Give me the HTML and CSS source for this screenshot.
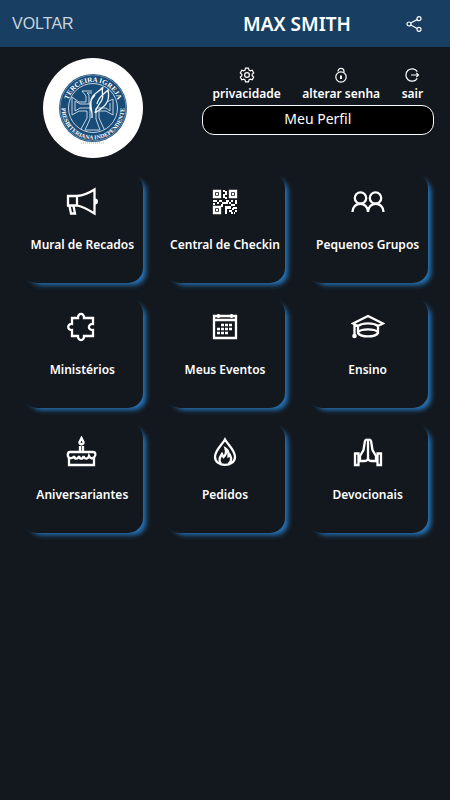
FILE: index.html
```html
<!DOCTYPE html>
<html lang="pt-BR">
<head>
    <meta charset="UTF-8">
    <meta name="viewport" content="width=device-width, initial-scale=1.0">
    <title>Meu Perfil</title>
    <link rel="stylesheet" href="styles.css">
</head>
<body>

<header class="topbar">
    <a href="#" class="back">VOLTAR</a>
    <h1 class="title">MAX SMITH</h1>
    <button type="button" class="share" aria-label="Compartilhar">
        <svg width="16" height="16" viewBox="0 0 16 16">
            <path d="M4.7 7 L11.2 3.6 M4.7 9 L11.2 12.6"/>
            <circle cx="3" cy="8" r="2"/>
            <circle cx="13" cy="2.7" r="2"/>
            <circle cx="13" cy="13.3" r="2"/>
        </svg>
    </button>
</header>

<main>
    <section class="profile">
        <div class="logo">
            <svg width="100" height="100" viewBox="0 0 100 100">
                <defs>
                    <path id="ring" d="M24 50 A26 26 0 0 1 76 50"/>
                    <path id="ringBottom" d="M20.4 39.2 A31.5 31.5 0 1 0 79.6 39.2"/>
                </defs>
                <circle cx="50" cy="50" r="34" fill="#184c78"/>
                <circle cx="50" cy="50" r="33" fill="none" stroke="#9db7cc" stroke-width="0.6"/>
                <circle cx="50" cy="50" r="24.5" fill="none" stroke="#c3d2df" stroke-width="1"/>
                <g class="logo-text">
                    <text class="logo-top"><textPath href="#ring" startOffset="50%" text-anchor="middle">TERCEIRA IGREJA</textPath></text>
                    <text><textPath href="#ringBottom" startOffset="50%" text-anchor="middle">PRESBITERIANA INDEPENDENTE</textPath></text>
                </g>
                <g fill="none" stroke="#c3d2df">
                    <path d="M43 44 V38 L39 33 H49 M43 44 H36 L29 39 V57 L36 53 H44 V60 L38 71 M56 53 H63 L70 57 V41 L64 44 M56 53 V60 L61 71"/>
                    <path d="M46 46 V37 L44 35 H49 M46 46 H37 L32 43 V53 L37 50 H47 V61 L42 72 H57 L53 61 V50 H63 L67 53 V45"/>
                    <path stroke="#f0f4f7" stroke-width="1.3" d="M49 60 C50 51 45 45 50 38 C53 34 57 33 60 29 C57 36 63 38 57 45 C55 48 53 50 52 55 M52 55 C59 50 68 46 65 32 C60 37 55 39 54 46 M49 55 C45 48 47 42 52 37"/>
                </g>
                <path d="M38 85 H62" stroke="#9db7cc" stroke-width="1" stroke-dasharray="1 1"/>
            </svg>
        </div>
        <div class="account">
            <nav class="account-links">
                <a href="#">
                    <svg width="16" height="16" viewBox="0 0 16 16">
                        <path d="M6.5 1.2 H9.5 L10 3.2 L11.3 3.9 L13.2 3.3 L14.7 5.9 L13.2 7.3 V8.7 L14.7 10.1 L13.2 12.7 L11.3 12.1 L10 12.8 L9.5 14.8 H6.5 L6 12.8 L4.7 12.1 L2.8 12.7 L1.3 10.1 L2.8 8.7 V7.3 L1.3 5.9 L2.8 3.3 L4.7 3.9 L6 3.2 Z"/>
                        <circle cx="8" cy="8" r="2.4"/>
                    </svg>
                    privacidade
                </a>
                <a href="#">
                    <svg width="16" height="16" viewBox="0 0 16 16">
                        <circle cx="8" cy="10" r="5.2"/>
                        <path d="M5 4.4 A3 3 0 0 1 11 4.4 V5.6"/>
                        <path d="M8 8.6 V12" stroke-width="2"/>
                    </svg>
                    alterar senha
                </a>
                <a href="#">
                    <svg width="16" height="16" viewBox="0 0 16 16">
                        <path d="M13.3 4.6 A6.2 6.2 0 1 0 13.3 11.4 M7 8 H14.5 M12.3 5.8 L14.5 8 L12.3 10.2"/>
                    </svg>
                    sair
                </a>
            </nav>
            <button type="button" class="profile-btn">Meu Perfil</button>
        </div>
    </section>

    <nav class="menu">
        <a href="#" class="card">
            <svg width="32" height="32" viewBox="0 0 32 32">
                <path d="M2 10 H11 C18 9.5 23 7 28.5 3.5 V27.5 C23 24 18 21 11 19.5 H2 Z M11 10 V19.5 M3.5 20 L5 27.5 H9 L7.5 20"/>
                <path class="solid" d="M29 12.5 A3 3 0 0 1 29 18.5 Z"/>
            </svg>
            <span>Mural de Recados</span>
        </a>
        <a href="#" class="card">
            <svg width="32" height="32" viewBox="0 0 32 32">
                <path d="M5 5 H11 V11 H5 Z M21 5 H27 V11 H21 Z M5 21 H11 V27 H5 Z"/>
                <path class="solid" d="M7 7h2v2h-2z M23 7h2v2h-2z M7 23h2v2h-2z M14 4h2v2h-2z M16 5h2v4h-2z M14 8h2v4h-2z M16 11h2v2h-2z M4 14h4v2h-4z M8 16h2v2h-2z M10 14h3v2h-3z M13 16h6v2h-6z M12 18h2v3h-2z M17 14h3v2h-3z M22 14h2v2h-2z M26 14h2v4h-2z M22 18h4v2h-4z M20 16h2v2h-2z M4 17h2v2h-2z M16 20h6v3h-6z M24 21h4v2h-4z M16 23h2v5h-2z M20 24h3v2h-3z M23 22h2v2h-2z M26 24h2v2h-2z M22 26h2v2h-2z M25 26h1v2h-1z"/>
            </svg>
            <span>Central de Checkin</span>
        </a>
        <a href="#" class="card">
            <svg width="34" height="32" viewBox="0 0 34 32">
                <circle cx="9.5" cy="12" r="5.7"/>
                <circle cx="24.5" cy="12" r="5.7"/>
                <path d="M1.5 26 C1.5 15 17 15 17 26 C17 15 32.5 15 32.5 26"/>
            </svg>
            <span>Pequenos Grupos</span>
        </a>
        <a href="#" class="card">
            <svg width="32" height="32" viewBox="0 0 32 32">
                <path d="M6 7 H12 C11.5 1.5 18.5 1.5 18 7 H27 V13 C21.5 12.5 21.5 19.5 27 19 V25 H18 C18.5 30.5 11.5 30.5 12 25 H6 V19 C1 19.5 1 12.5 6 13 Z"/>
            </svg>
            <span>Ministérios</span>
        </a>
        <a href="#" class="card">
            <svg width="32" height="32" viewBox="0 0 32 32">
                <path d="M5 5 H27 V27 H5 Z M5 9 H27 M9.5 3 V7 M22.5 3 V7"/>
                <path class="dots" d="M12 14 H24 M8 18 H24 M8 22 H20"/>
            </svg>
            <span>Meus Eventos</span>
        </a>
        <a href="#" class="card">
            <svg width="34" height="32" viewBox="0 0 34 32">
                <path d="M2 12.5 L17 5 L32 12.5 L27 15 C22 11.5 12 11.5 7 15 Z M7 14 V22 C10 26.5 24 26.5 27 22 V14 M7 21 C11 17.5 23 17.5 27 21 M3.5 13 V23"/>
                <circle class="solid" cx="3.5" cy="25" r="2.3"/>
            </svg>
            <span>Ensino</span>
        </a>
        <a href="#" class="card">
            <svg width="32" height="32" viewBox="0 0 32 32">
                <path d="M3 22 V29 H28 V22 M15.5 2 L13.5 6 C13 9 18 9 17.5 6 Z M14 10 V16 M17 10 V16"/>
                <path d="M4 16 H27 C30 16 30 20 28 21.5 C26 23 24 22 23 20 C22 23.5 18.5 23.5 17.5 20 C17 23.5 13.5 23.5 13 20 C12 23.5 8.5 23.5 8 20 C7 23 1.8 23 1.8 19 C1.8 17 2.5 16 4 16 Z"/>
            </svg>
            <span>Aniversariantes</span>
        </a>
        <a href="#" class="card">
            <svg width="32" height="32" viewBox="0 0 32 32">
                <path d="M16 3.5 C13 9 6 14 6 21 C6 31.5 26 31.5 26 21 C26 14 19 9 16 3.5 Z M12 28 C9 24 11 21 13 18 L14.5 21 C17 19 17.5 16 16.5 12.5 C20.5 15 19.5 18 19.5 20 L21 19 C23 23 22 26 19.5 28"/>
            </svg>
            <span>Pedidos</span>
        </a>
        <a href="#" class="card">
            <svg width="32" height="32" viewBox="0 0 32 32">
                <path d="M16 4 V23 M16 4 C14 3 13 4 12.8 6 L11.5 14 L8 20 V25 H12 C14 25 16 24.5 16 22 C16 24.5 18 25 20 25 H24 V20 L20.5 14 L19.2 6 C19 4 18 3 16 4"/>
                <path d="M3 17.5 H6.5 V29 H3 Z M25.5 17.5 H29 V29 H25.5 Z"/>
            </svg>
            <span>Devocionais</span>
        </a>
    </nav>
</main>

</body>
</html>
```
FILE: styles.css
```css
* {
    box-sizing: border-box;
}
body {
    margin: 0;
    min-height: 100vh;
    background-color: #13181e;
    color: white;
    font-family: "Noto Sans", sans-serif;
}
a {
    color: inherit;
    text-decoration: none;
}
button {
    font-family: inherit;
    color: inherit;
    cursor: pointer;
}
svg {
    display: block;
}
.topbar {
    display: grid;
    grid-template-columns: 48% 36% 16%;
    align-items: center;
    height: 47px;
    background-color: #183f61;
}
.back {
    padding-left: 12px;
    font-family: "Liberation Sans", Arial, sans-serif;
    font-size: 16px;
    color: #c9d3dd;
}
.title {
    margin: 0;
    font-size: 19px;
    font-weight: 600;
    text-align: center;
    white-space: nowrap;
}
.share {
    justify-self: center;
    padding: 0;
    border: none;
    background: none;
}
.share svg,
.account-links svg {
    fill: none;
    stroke: white;
    stroke-width: 1.2;
}
.profile {
    display: grid;
    grid-template-columns: 4fr 5fr;
    column-gap: 16px;
    padding: 11px 16px 15px 0;
}
.logo {
    justify-self: center;
    width: 100px;
    height: 100px;
    border-radius: 50%;
    background-color: white;
    overflow: hidden;
}
.logo-text {
    fill: white;
    font-family: "Liberation Serif", serif;
    font-size: 6px;
    font-weight: bold;
}
.logo-top {
    font-size: 7px;
}
.account {
    padding-top: 9px;
}
.account-links {
    display: flex;
    justify-content: space-around;
}
.account-links a {
    display: flex;
    flex-direction: column;
    align-items: center;
    row-gap: 3px;
    font-size: 12px;
    font-weight: 600;
    line-height: 16px;
}
.profile-btn {
    width: 100%;
    height: 30px;
    margin-top: 3px;
    border: 1px solid white;
    border-radius: 12px;
    background-color: black;
    font-size: 14px;
    line-height: 16px;
    padding: 0 0 2px;
}
.menu {
    display: grid;
    grid-template-columns: repeat(3, 1fr);
    gap: 15px 22px;
    padding: 0 22px;
}
.card {
    display: flex;
    flex-direction: column;
    align-items: center;
    row-gap: 19px;
    height: 110px;
    padding-top: 13px;
    border-radius: 15px;
    background-color: #13181e;
    box-shadow: 5px 4px 5px -2px #2676bc;
    font-size: 12px;
    font-weight: 600;
    line-height: 16px;
    white-space: nowrap;
}
.card svg {
    fill: none;
    stroke: white;
    stroke-width: 2.3;
}
.card .solid {
    fill: white;
    stroke: none;
}
.card .dots {
    stroke-dasharray: 3 1;
}
```
